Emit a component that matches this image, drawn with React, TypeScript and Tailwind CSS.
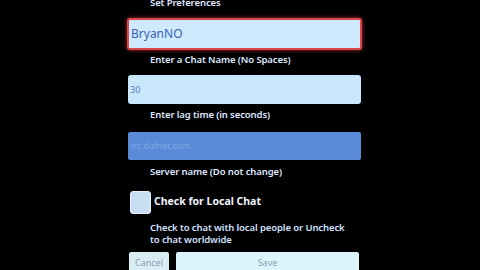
export default function App() {
  const label = "pl-[23px] text-[9.5px] font-semibold leading-[12px] tracking-[-0.1px] text-[#dfe8ff] whitespace-nowrap"
  return (
    <div className="w-[480px] h-[270px] bg-black overflow-hidden font-['Noto_Sans',sans-serif]">
      <div className="ml-[127px] w-[235px] flex flex-col">
        <div className={`-mt-[3px] ${label}`}>Set Preferences</div>

        {/* chat name - focused */}
        <div className="mt-[9px] h-[32px] rounded-[3px] border-2 border-[#d9474a] bg-[#cfeafe] shadow-[0_0_4px_#b03030] flex items-center pl-[2px]">
          <span className="text-[12px] text-[#3a62b0]">BryanNO</span>
        </div>
        <div className={`mt-[4px] ${label}`}>Enter a Chat Name (No Spaces)</div>

        {/* lag time */}
        <div className="mt-[9px] mx-[1px] h-[29px] rounded-[3px] bg-[#c8e6fc] flex items-center pl-[2px]">
          <span className="text-[9px] text-[#5a7fb8]">30</span>
        </div>
        <div className={`mt-[5px] ${label}`}>Enter lag time (in seconds)</div>

        {/* server - disabled */}
        <div className="mt-[11px] mx-[1px] h-[28px] rounded-[2px] bg-[#5a8bd8] flex items-center pl-[3px]">
          <span className="text-[9px] text-[#7ea6e6]">irc.dalnet.com</span>
        </div>
        <div className={`mt-[6px] ${label}`}>Server name (Do not change)</div>

        {/* checkbox */}
        <div className="mt-[12px] h-[24px] flex items-center">
          <div className="ml-[3px] w-[21px] h-[23px] rounded-[3px] bg-[#c9def2] border border-[#e8f2ff]" />
          <span className="ml-[3px] text-[10.5px] font-bold text-[#f0f4ff] whitespace-nowrap">Check for Local Chat</span>
        </div>
        <div className="mt-[8px] pl-[23px] text-[9.5px] font-semibold leading-[12px] tracking-[-0.1px] text-[#d2e0ff] whitespace-nowrap">
          Check to chat with local people or Uncheck<br />to chat worldwide
        </div>

        {/* buttons */}
        <div className="mt-[6px] flex gap-[7px]">
          <div className="ml-[2px] w-[40px] h-[24px] rounded-[2px] bg-[#d8eef4] flex items-start justify-center pt-[5px] text-[9px] leading-[12px] text-[#8aa0b4]">Cancel</div>
          <div className="w-[183px] h-[24px] rounded-[2px] bg-[#dbf3fb] flex items-start justify-center pt-[5px] text-[9px] leading-[12px] text-[#8aa0b4]">Save</div>
        </div>
      </div>
    </div>
  )
}
